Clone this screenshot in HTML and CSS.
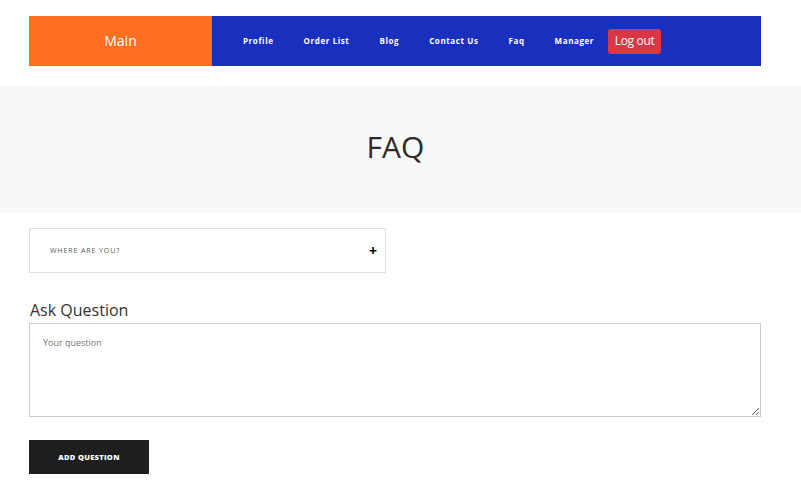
FILE: index.html
```html
<!DOCTYPE html>
<html>
<head>
<meta charset="utf-8">
<link rel="stylesheet" href="styles.css">
</head>
<body>
<header class="topbar">
  <div class="brand">Main</div>
  <nav class="nav">
    <a class="nav-link">Profile</a>
    <a class="nav-link">Order List</a>
    <a class="nav-link">Blog</a>
    <a class="nav-link">Contact Us</a>
    <a class="nav-link">Faq</a>
    <a class="nav-link">Manager</a>
    <button class="logout">Log out</button>
  </nav>
</header>
<section class="banner">
  <h1 class="banner-title">FAQ</h1>
</section>
<main class="content">
  <div class="accordion">
    <span class="acc-title">WHERE ARE YOU?</span>
    <span class="acc-plus">+</span>
  </div>
  <h2 class="ask-title">Ask Question</h2>
  <textarea class="question" placeholder="Your question"></textarea>
  <button class="add-btn">ADD QUESTION</button>
</main>
</body>
</html>
```
FILE: styles.css
```css
* { box-sizing: border-box; }
body {
  margin: 0;
  font-family: "Open Sans", "Liberation Sans", sans-serif;
  background: #fff;
  color: #333;
}
.topbar {
  display: flex;
  width: 732px;
  height: 50px;
  margin: 16px 0 0 29px;
}
.brand {
  width: 183px;
  background: #ff6f21;
  color: #fff;
  font-size: 14px;
  display: flex;
  align-items: center;
  justify-content: center;
  padding-bottom: 2px;
}
.nav {
  flex: 1;
  background: #1830bd;
  display: flex;
  align-items: center;
  padding-left: 16px;
}
.nav-link {
  color: #fff;
  font-size: 8px;
  font-weight: 700;
  letter-spacing: 0.6px;
  padding: 0 15px;
  margin-bottom: 2px;
}
.logout {
  margin-left: -1px;
  width: 53px;
  height: 25px;
  border: none;
  border-radius: 3px;
  background: #dc3545;
  color: #fff;
  font-family: inherit;
  font-size: 12px;
  letter-spacing: -0.3px;
  padding: 0 0 2px;
}
.banner {
  margin-top: 19px;
  height: 128px;
  background: #f8f8f8;
  display: flex;
  align-items: center;
  justify-content: center;
}
.banner-title {
  margin: 0 10px 6px 0;
  font-weight: 400;
  font-size: 30px;
  color: #2b2b2b;
}
.content {
  margin-left: 29px;
  width: 732px;
  padding-top: 15px;
  display: flex;
  flex-direction: column;
  align-items: flex-start;
}
.accordion {
  width: 357px;
  height: 45px;
  border: 1px solid #e0e0e0;
  display: flex;
  align-items: center;
  justify-content: space-between;
  padding: 0 8px 0 20px;
}
.acc-title {
  font-size: 7px;
  letter-spacing: 0.9px;
  color: #555;
}
.acc-plus {
  font-size: 14px;
  font-weight: 700;
  color: #000;
  line-height: 1;
}
.ask-title {
  margin: 26px 0 2px 1px;
  font-size: 16px;
  font-weight: 400;
  color: #333;
}
.question {
  width: 732px;
  height: 94px;
  border: 1px solid #ccc;
  padding: 12px 13px;
  font-family: inherit;
  font-size: 9px;
  resize: vertical;
}
.question::placeholder { color: #777; }
.add-btn {
  margin-top: 23px;
  width: 120px;
  height: 34px;
  border: none;
  background: #1e1e1e;
  color: #fff;
  font-family: inherit;
  font-size: 7.5px;
  font-weight: 800;
  letter-spacing: 0.3px;
}
```
